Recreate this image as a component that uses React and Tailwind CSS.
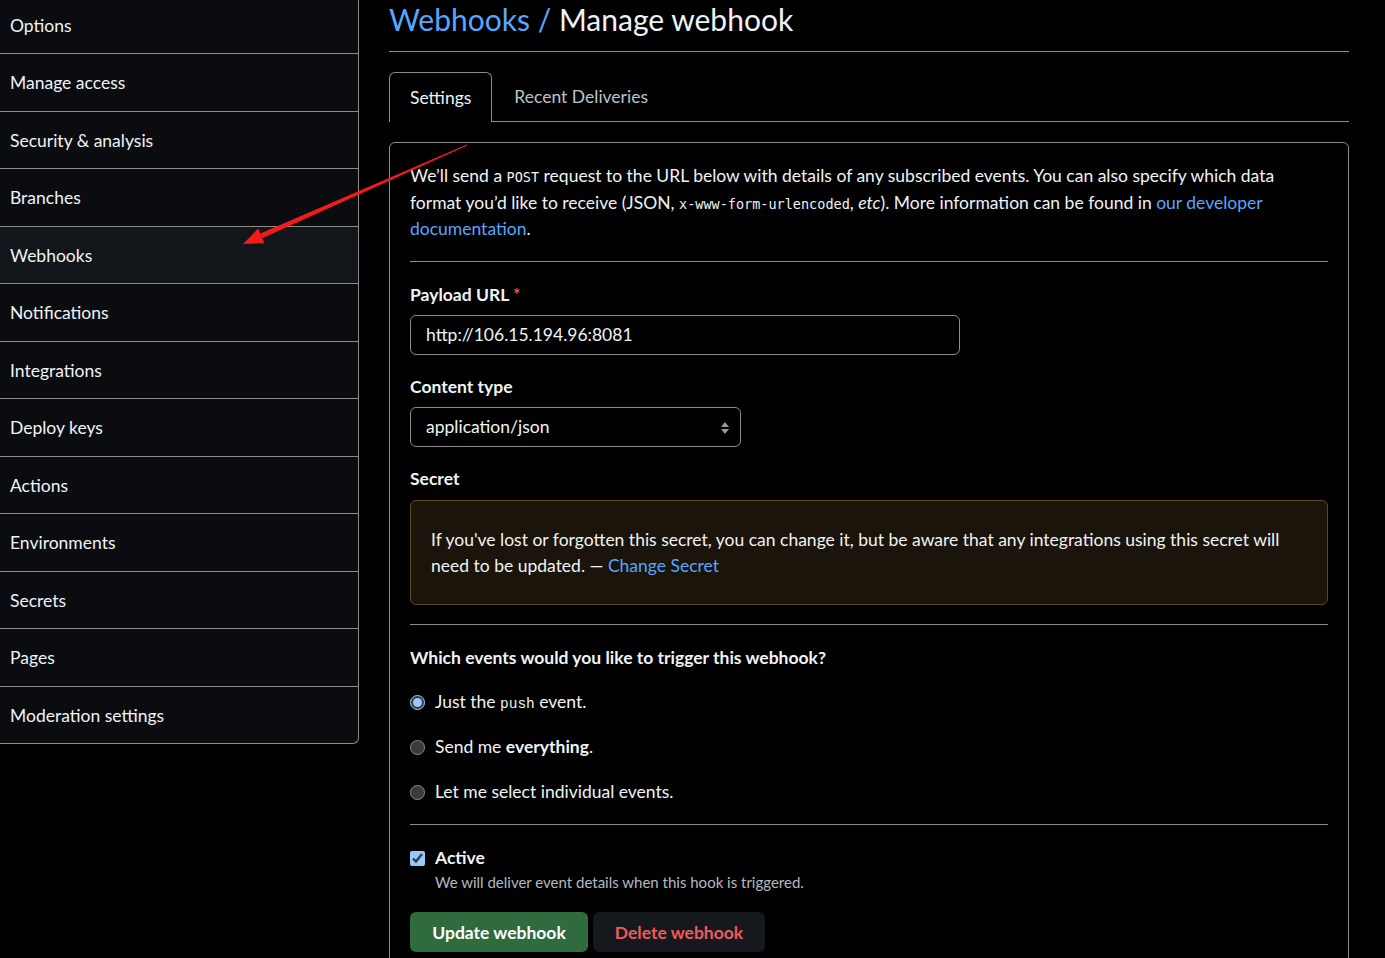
import React from 'react';

const menu = [
  'Options',
  'Manage access',
  'Security & analysis',
  'Branches',
  'Webhooks',
  'Notifications',
  'Integrations',
  'Deploy keys',
  'Actions',
  'Environments',
  'Secrets',
  'Pages',
  'Moderation settings',
];

function Arrow() {
  return (
    <svg className="absolute left-0 top-0 pointer-events-none" width="1385" height="958">
      <polygon points="467.2,145.5 466.8,144.5 260.3,233.6 262.3,238.2" fill="#f21b1b" />
      <polygon points="243,244 258.1,228.6 264.5,243.2" fill="#f21b1b" />
    </svg>
  );
}

function Radio({ checked, children }) {
  return (
    <label className="flex items-center h-[26px] gap-[10px]">
      <input
        type="radio"
        name="events"
        defaultChecked={checked}
        className="m-0 w-[15px] h-[15px] [color-scheme:dark] accent-[#99c8ff]"
      />
      <span>{children}</span>
    </label>
  );
}

export default function App() {
  return (
    <div className="relative h-[958px] overflow-hidden bg-black text-[#f0f3f6] font-['Lato',sans-serif] text-[17.5px] flex items-start">
      <nav className="w-[359px] shrink-0 bg-[#0a0c10] border-r border-b border-[#8f8a84] rounded-br-md">
        {menu.map((item, i) => (
          <div
            key={item}
            className={`flex items-center pl-[10px] ${i === 0 ? 'h-[53px]' : 'h-[57.5px] pt-[2px] border-t border-[#8f8a84]'} ${item === 'Webhooks' ? 'bg-[#12151a]' : ''}`}
          >
            {item}
          </div>
        ))}
      </nav>

      <main className="ml-[30px] w-[960px] shrink-0">
        <h1 className="text-[30px] leading-[39px] pb-[12px] border-b border-[#8c8c8c]">
          <span className="text-[#58a6ff]">Webhooks / </span>Manage webhook
        </h1>

        <div className="mt-[20px] flex items-end h-[50px] border-b border-[#8c8c8c]">
          <div className="h-[50px] -mb-px px-[20px] pt-[2px] flex items-center bg-black border-x border-t border-[#8c8c8c] rounded-t-md">
            Settings
          </div>
          <div className="h-[49px] px-[22px] pt-[2px] flex items-center text-[#bcc3cc]">Recent Deliveries</div>
        </div>

        <section className="mt-[20px] border border-[#8c8c8c] rounded-md px-[20px] pt-[20px] pb-[40px]">
          <p className="leading-[26.5px]">
            We’ll send a <code className="font-['DejaVu_Sans_Mono',monospace] text-[13.5px] leading-none">POST</code> request to the URL below with details of any subscribed events. You can also specify which data format you’d like to receive (JSON,{' '}
            <code className="font-['DejaVu_Sans_Mono',monospace] text-[13.5px] leading-none">x-www-form-urlencoded</code>, <em>etc</em>). More information can be found in{' '}
            <a className="text-[#58a6ff]">our developer documentation</a>.
          </p>

          <div className="mt-[18px] border-t border-[#8c8c8c]" />

          <div className="mt-[20px] font-bold leading-[26px]">
            Payload URL <span className="text-[#f85149]">*</span>
          </div>
          <input
            readOnly
            value="http://106.15.194.96:8081"
            className="mt-[7px] block w-[550px] h-[40px] px-[15px] bg-black border border-[#8c8c8c] rounded-md text-[#f0f3f6] outline-none"
          />

          <div className="mt-[19px] font-bold leading-[26px]">Content type</div>
          <div className="mt-[7px] w-[331px] h-[40px] pl-[15px] pr-[10px] pt-[2px] flex items-center justify-between border border-[#8c8c8c] rounded-md">
            <span>application/json</span>
            <svg width="10" height="14" viewBox="0 0 10 14">
              <path d="M5 1 L9 6 L1 6 Z" fill="#9a9a9a" />
              <path d="M5 13 L9 8 L1 8 Z" fill="#9a9a9a" />
            </svg>
          </div>

          <div className="mt-[19px] font-bold leading-[26px]">Secret</div>
          <div className="mt-[8px] px-[20px] pt-[26px] pb-[25px] bg-[#1a140a] border border-[#5c4a1c] rounded-md leading-[26px]">
            If you've lost or forgotten this secret, you can change it, but be aware that any integrations using this secret will need to be updated. — <a className="text-[#58a6ff]">Change Secret</a>
          </div>

          <div className="mt-[19px] border-t border-[#8c8c8c]" />

          <div className="mt-[20px] font-bold leading-[26px]">Which events would you like to trigger this webhook?</div>
          <div className="mt-[19px] flex flex-col gap-[19px]">
            <Radio checked>
              Just the <code className="text-[14.5px] leading-none">push</code> event.
            </Radio>
            <Radio>
              Send me <strong>everything</strong>.
            </Radio>
            <Radio>Let me select individual events.</Radio>
          </div>

          <div className="mt-[18px] border-t border-[#8c8c8c]" />

          <label className="mt-[21px] flex items-center h-[26px] gap-[10px]">
            <input type="checkbox" defaultChecked className="m-0 w-[15px] h-[15px] [color-scheme:dark] accent-[#99c8ff]" />
            <span className="font-bold">Active</span>
          </label>
          <div className="pl-[25px] text-[15px] leading-[20px] text-[#b4b9c0]">
            We will deliver event details when this hook is triggered.
          </div>

          <div className="mt-[20px] flex gap-[5px]">
            <button className="h-[40px] w-[178px] pt-[3px] rounded-md bg-[#2f6b3d] font-bold text-white">Update webhook</button>
            <button className="h-[40px] w-[172px] pt-[3px] rounded-md bg-[#15181d] font-bold text-[#f05a5a]">Delete webhook</button>
          </div>
        </section>
      </main>

      <Arrow />
    </div>
  );
}
